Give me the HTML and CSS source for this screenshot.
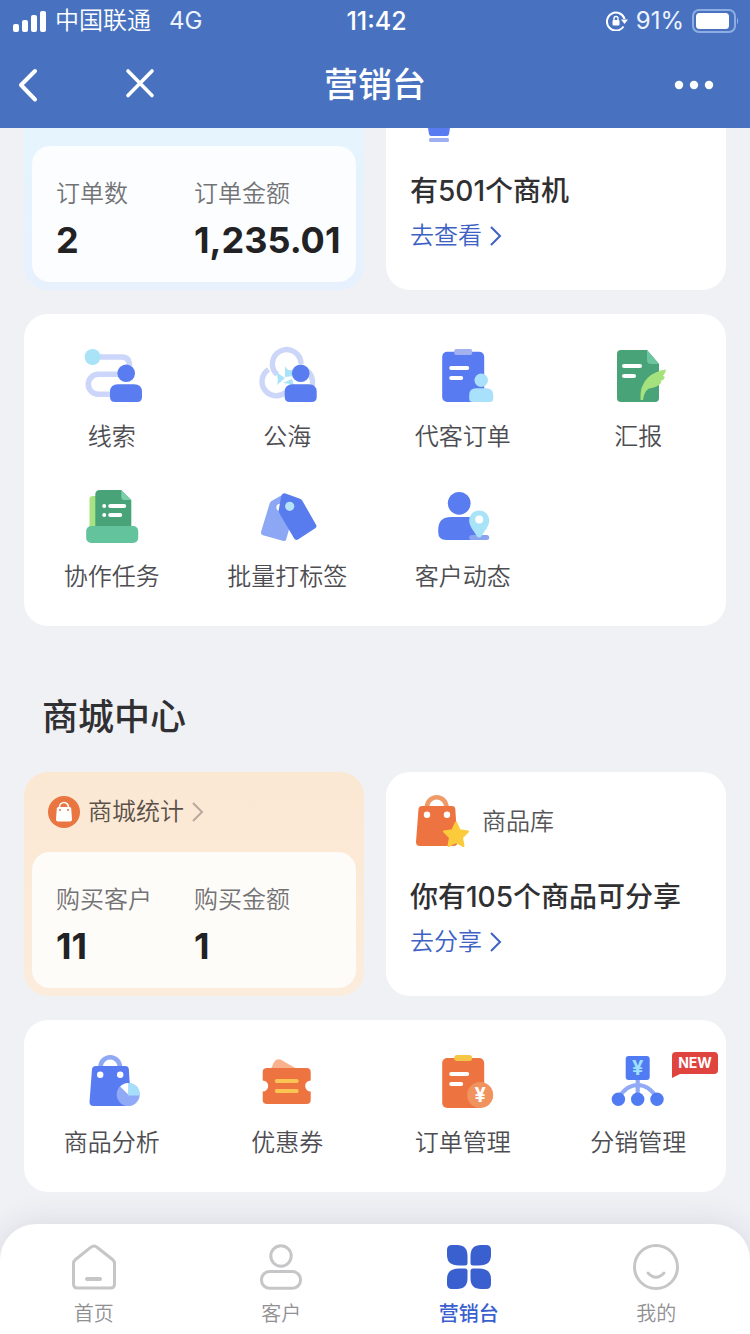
FILE: index.html
```html
<!DOCTYPE html>
<html lang="zh-CN">

<head>
    <meta charset="UTF-8">
    <meta name="viewport" content="width=device-width, initial-scale=1.0">
    <title>营销台</title>
    <link rel="stylesheet" href="styles.css">
</head>

<body>
    <header class="header">
        <div class="status-bar">
            <div class="status-left">
                <svg width="34" height="22" viewBox="0 0 34 22" fill="#fff" aria-hidden="true">
                    <rect x="0" y="14" width="6" height="8" rx="2" />
                    <rect x="9" y="10" width="6" height="12" rx="2" />
                    <rect x="18" y="5" width="6" height="17" rx="2" />
                    <rect x="27" y="1" width="6" height="21" rx="2" />
                </svg>
                <span class="carrier">中国联通</span>
                <span class="network">4G</span>
            </div>
            <span class="clock">11:42</span>
            <div class="status-right">
                <svg width="22" height="20" viewBox="0 0 22 20" aria-hidden="true">
                    <path d="M17.500 15.500A9 9 0 1 1 18.600 8" fill="none" stroke="#fff" stroke-width="2" />
                    <path d="M15 8.500h7l-3.500 4.500z" fill="#fff" />
                    <rect x="6.500" y="9" width="7" height="5.500" rx="1" fill="#fff" />
                    <path d="M8 9V7.500a2 2 0 0 1 4 0V9" fill="none" stroke="#fff" stroke-width="1.400" />
                </svg>
                <span class="battery-level">91%</span>
                <svg width="48" height="24" viewBox="0 0 48 24" aria-hidden="true">
                    <rect x="1" y="1" width="42" height="22" rx="6" fill="none" stroke="#8eaee3" stroke-width="2" />
                    <rect x="4" y="4" width="33" height="16" rx="3.500" fill="#fff" />
                    <path d="M45 8.500q2.500 3.500 0 7z" fill="#8eaee3" />
                </svg>
            </div>
        </div>
        <div class="nav-bar">
            <div class="nav-left">
                <button type="button" class="nav-button" aria-label="返回">
                    <svg width="24" height="36" viewBox="0 0 24 36"><path d="M19 4L5 18l14 14.500" fill="none" stroke="#fff" stroke-width="4" stroke-linecap="round" stroke-linejoin="round" /></svg>
                </button>
                <button type="button" class="nav-button" aria-label="关闭">
                    <svg width="32" height="36" viewBox="0 0 32 36"><path d="M4 4l24 24.500M28 4L4 28.500" fill="none" stroke="#fff" stroke-width="3.600" stroke-linecap="round" /></svg>
                </button>
            </div>
            <h1>营销台</h1>
            <div class="nav-right">
                <button type="button" class="nav-button" aria-label="更多">
                    <svg width="40" height="10" viewBox="0 0 40 10" fill="#fff"><circle cx="5" cy="5" r="4.200" /><circle cx="20" cy="5" r="4.200" /><circle cx="35" cy="5" r="4.200" /></svg>
                </button>
            </div>
        </div>
    </header>

    <main class="content">
        <section class="cards">
            <div class="stat-card stat-blue cut">
                <dl class="stat-panel">
                    <div>
                        <dt>订单数</dt>
                        <dd>2</dd>
                    </div>
                    <div>
                        <dt>订单金额</dt>
                        <dd>1,235.01</dd>
                    </div>
                </dl>
            </div>
            <div class="info-card cut">
                <svg class="lamp" width="60" height="14" viewBox="0 0 60 14" aria-hidden="true">
                    <path d="M18 0h22l-1 6q-.500 2-2 2H21q-1.500 0-2-2z" fill="#587bf2" />
                    <rect x="19" y="10" width="20" height="4" rx="1.500" fill="#9fb0f2" />
                </svg>
                <h3>有501个商机</h3>
                <a href="#" class="more">去查看
                    <svg width="12" height="20" viewBox="0 0 12 20"><path d="M1 1l9 9-9 9" /></svg>
                </a>
            </div>
        </section>

        <nav class="menu">
            <a href="#" class="menu-item">
                <svg class="menu-icon" viewBox="0 0 60 60">
                    <path d="M16 11h24q7.500 0 7.500 9M38 28.300H16.300a10 10 0 0 0 0 20H32" fill="none" stroke="#ccd6fa" stroke-width="5.600" />
                    <circle cx="10.600" cy="11" r="8" fill="#a9e3f8" />
                    <circle cx="44.200" cy="27.300" r="8.800" fill="#5a7cf1" />
                    <path d="M28 46q0-7.700 8-7.700h16q8 0 8 7.700v5q0 5-5 5H33q-5 0-5-5z" fill="#5a7cf1" />
                </svg>
                <span>线索</span>
            </a>
            <a href="#" class="menu-item">
                <svg class="menu-icon" viewBox="0 0 60 60">
                    <g fill="none" stroke="#ccd6f8" stroke-width="5.400">
                        <path d="M20 28.500A14.300 14.300 0 1 1 44 18" />
                        <path d="M11.500 23.500A14.300 14.300 0 1 0 29 46" />
                        <path d="M48 23q9 6 7.500 17" />
                    </g>
                    <g fill="#a9e3f8">
                        <path d="M19 26l9 6-8 7q2-6-1-13z" />
                        <path d="M28 20q2 5 7 4l2 6-9 1z" />
                        <path d="M26 37l9-4 2 7q-5-3-11-3z" />
                    </g>
                    <circle cx="43.700" cy="27.300" r="8.800" fill="#5a7cf1" />
                    <path d="M27.700 46q0-7.700 8-7.700h16q8 0 8 7.700v5q0 5-5 5h-22q-5 0-5-5z" fill="#5a7cf1" />
                </svg>
                <span>公海</span>
            </a>
            <a href="#" class="menu-item">
                <svg class="menu-icon" viewBox="0 0 60 60">
                    <rect x="9.200" y="5.700" width="42" height="50.300" rx="5" fill="#587bf2" />
                    <rect x="21.200" y="3" width="18" height="6" rx="2" fill="#a2b1f0" />
                    <rect x="16.200" y="20" width="20" height="4" rx="2" fill="#fff" />
                    <rect x="16.200" y="30" width="14" height="4" rx="2" fill="#fff" />
                    <circle cx="48.200" cy="34.300" r="6.700" fill="#a9e0fb" />
                    <path d="M36.200 49q0-6.700 7-6.700h10q7 0 7 6.700v3.500q0 3.500-3.500 3.500h-17q-3.500 0-3.500-3.500z" fill="#a9e0fb" />
                </svg>
                <span>代客订单</span>
            </a>
            <a href="#" class="menu-item">
                <svg class="menu-icon" viewBox="0 0 60 60">
                    <path d="M13 4h26l12 14v34q0 4-4 4H13q-4 0-4-4V8q0-4 4-4z" fill="#48a378" />
                    <path d="M39 4l12 14h-8q-4 0-4-4z" fill="#6cc59e" />
                    <rect x="14" y="18" width="20" height="4" rx="2" fill="#fff" />
                    <rect x="14" y="28" width="14" height="4" rx="2" fill="#fff" />
                    <path d="M32.500 54q-1-14 7-22 7-7 18.500-8.500-.500 4-3 6.500l2 1q-1 3-4.500 4l1 1.500q-4 5-12.500 6-5 3-6 11.500z" fill="#a5e17c" />
                </svg>
                <span>汇报</span>
            </a>
            <a href="#" class="menu-item">
                <svg class="menu-icon" viewBox="0 0 60 60">
                    <path d="M11 10h6v34H7.500V13q0-3 3.500-3z" fill="#a9e283" />
                    <path d="M18 4h21l10.300 10v30h-36V8.500q0-4.500 4.700-4.500z" fill="#48a378" />
                    <path d="M39.300 4l10 10h-7q-3 0-3-3z" fill="#7ccfaa" />
                    <circle cx="22.200" cy="20" r="2" fill="#fff" />
                    <rect x="26.200" y="18" width="18" height="4" rx="2" fill="#fff" />
                    <circle cx="22.200" cy="29" r="2" fill="#fff" />
                    <rect x="26.200" y="27" width="14" height="4" rx="2" fill="#fff" />
                    <rect x="4.200" y="40" width="52" height="17" rx="5" fill="#62c39c" />
                </svg>
                <span>协作任务</span>
            </a>
            <a href="#" class="menu-item">
                <svg class="menu-icon" viewBox="0 0 60 60">
                    <path d="M26 8.500L14.500 15q-1.500 1-2 3L4 46q-.500 2.500 2 3.200L26.500 55q2 .500 2.700-1.500L38 22z" fill="#8ca8f5" />
                    <circle cx="23" cy="21.300" r="3.600" fill="#fff" />
                    <path d="M28.500 7.400L43 12.800q1.500.600 2.500 2.200L59.200 39q1 2-1 3.200L41 53.500q-2.500 1.300-3.800-1L22.800 28q-1.300-2-1-4.500l2.500-13.600q.800-3.500 4.200-2.500z" fill="#587bee" />
                    <circle cx="32.700" cy="20.300" r="4.600" fill="#b5e4f8" />
                </svg>
                <span>批量打标签</span>
            </a>
            <a href="#" class="menu-item">
                <svg class="menu-icon" viewBox="0 0 60 60">
                    <circle cx="26.200" cy="17.300" r="11.400" fill="#5a7cf1" />
                    <path d="M5.200 44q0-13 13-13H36q11 0 11 12v11H13.200q-8 0-8-8z" fill="#5a7cf1" />
                    <rect x="36.200" y="49" width="20" height="5" rx="2.500" fill="#8ba4ef" />
                    <path d="M46.200 24.500c6 0 10 4.500 10 10 0 6-4.500 10-7.500 15.500q-2.500 3-5 0c-3-5.500-7.500-9.500-7.500-15.500 0-5.500 4-10 10-10z" fill="#a9e3f8" />
                    <circle cx="46.200" cy="33.500" r="4" fill="#fff" />
                </svg>
                <span>客户动态</span>
            </a>
        </nav>

        <h2 class="section-title">商城中心</h2>

        <section class="cards">
            <div class="stat-card stat-orange">
                <a href="#" class="stat-head">
                    <svg width="32" height="32" viewBox="0 0 32 32">
                        <circle cx="16" cy="16" r="16" fill="#e97640" />
                        <path d="M11.500 12V11a4.500 4.500 0 0 1 9 0v1" fill="none" stroke="#fff" stroke-width="1.600" />
                        <path d="M10.500 11h11q1.500 0 1.700 1.500l.8 11q0 2-2 2H10q-2 0-2-2l.8-11Q9 11 10.500 11z" fill="#fff" />
                        <circle cx="12" cy="14" r="1" fill="#e97640" />
                        <circle cx="20" cy="14" r="1" fill="#e97640" />
                    </svg>
                    <span>商城统计</span>
                    <svg class="arrow" width="12" height="20" viewBox="0 0 12 20"><path d="M1 1l9 9-9 9" /></svg>
                </a>
                <dl class="stat-panel">
                    <div>
                        <dt>购买客户</dt>
                        <dd>11</dd>
                    </div>
                    <div>
                        <dt>购买金额</dt>
                        <dd>1</dd>
                    </div>
                </dl>
            </div>
            <div class="info-card">
                <div class="info-head">
                    <svg class="menu-icon" viewBox="0 0 60 60" aria-hidden="true">
                        <path d="M17 15a9.700 9.700 0 0 1 19.400 0" fill="none" stroke="#f09a68" stroke-width="4.600" />
                        <path d="M12 14h30q3 0 3.300 3l2.200 33q0 4-4 4H10q-4 0-4-4L8.500 17q.500-3 3.500-3z" fill="#ed7440" />
                        <circle cx="17" cy="22.700" r="3.200" fill="#fff" />
                        <circle cx="37" cy="22.700" r="3.200" fill="#fff" />
                        <path d="M46 30.500l3.700 7.800 8.300 1.200-6 6 1.500 8.500-7.500-4-7.500 4 1.500-8.500-6-6 8.300-1.200z" fill="#fbcb3c" stroke="#fbcb3c" stroke-width="2" stroke-linejoin="round" />
                    </svg>
                    <span>商品库</span>
                </div>
                <h3>你有105个商品可分享</h3>
                <a href="#" class="more">去分享
                    <svg width="12" height="20" viewBox="0 0 12 20"><path d="M1 1l9 9-9 9" /></svg>
                </a>
            </div>
        </section>

        <nav class="menu">
            <a href="#" class="menu-item">
                <svg class="menu-icon" viewBox="0 0 60 60">
                    <path d="M18.500 15a9.700 9.700 0 0 1 19.400 0" fill="none" stroke="#8fa9f5" stroke-width="4.600" />
                    <path d="M14 14h29q3.500 0 3.800 3l2.200 33q0 4-4 4H11.500q-4 0-4-4L10 17q.500-3 4-3z" fill="#587bf2" />
                    <circle cx="18.200" cy="22.700" r="3.200" fill="#fff" />
                    <circle cx="38.200" cy="22.700" r="3.200" fill="#fff" />
                    <circle cx="46.200" cy="42.500" r="11.500" fill="#90aaf7" />
                    <path d="M46.200 43.500V31a11.500 11.500 0 0 1 11.500 12.500z" fill="#a5dffb" />
                    <path d="M46.200 42.500V31q-4.500 0-8 3.500z" fill="#fff" />
                </svg>
                <span>商品分析</span>
            </a>
            <a href="#" class="menu-item">
                <svg class="menu-icon" viewBox="0 0 60 60">
                    <path d="M14 17l2.500-6q2.500-5 7-3.500L40 17z" fill="#f8b28e" />
                    <path d="M10 16h39.500q4.200 0 4.200 4v8.500a5.500 5.500 0 0 0 0 11V48q0 4-4.200 4H10q-4.300 0-4.300-4v-8.500a5.500 5.500 0 0 0 0-11V20q0-4 4.300-4z" fill="#ed7440" />
                    <path d="M19.700 29h20M19.700 39h20" stroke="#fcc453" stroke-width="4" stroke-linecap="round" />
                </svg>
                <span>优惠券</span>
            </a>
            <a href="#" class="menu-item">
                <svg class="menu-icon" viewBox="0 0 60 60">
                    <rect x="9.200" y="6" width="42" height="50" rx="5" fill="#ed7440" />
                    <rect x="21.200" y="3" width="18" height="6" rx="3" fill="#f8c647" />
                    <rect x="16.200" y="20" width="20" height="4" rx="2" fill="#fff" />
                    <rect x="16.200" y="30" width="14" height="4" rx="2" fill="#fff" />
                    <circle cx="47.200" cy="43" r="13" fill="#f1935e" />
                    <text x="47.200" y="50" class="yen" fill="#fff">¥</text>
                </svg>
                <span>订单管理</span>
            </a>
            <a href="#" class="menu-item">
                <svg class="menu-icon" viewBox="0 0 60 60">
                    <path d="M29.700 27v18M10.400 46q8-13 19.300-13t19.300 13" fill="none" stroke="#90aaf5" stroke-width="4.200" />
                    <rect x="17.700" y="4" width="24" height="24" rx="3" fill="#507bf2" />
                    <text x="29.700" y="23" class="yen" fill="#9fe0fb">¥</text>
                    <circle cx="10.400" cy="47.300" r="6.700" fill="#507bf2" />
                    <circle cx="29.700" cy="47.300" r="6.700" fill="#507bf2" />
                    <circle cx="49" cy="47.300" r="6.700" fill="#507bf2" />
                </svg>
                <span>分销管理</span>
                <em class="badge">NEW</em>
            </a>
        </nav>
    </main>

    <nav class="tab-bar">
        <a href="#" class="tab">
            <svg width="46" height="46" viewBox="0 0 46 46">
                <path d="M20 3.200q3-2.300 6 0L41.500 15.500q2 1.600 2 4V40q0 4-4 4h-33q-4 0-4-4V19.500q0-2.400 2-4z" />
                <path d="M16 35h13" stroke-width="4" />
            </svg>
            <span>首页</span>
        </a>
        <a href="#" class="tab">
            <svg width="46" height="46" viewBox="0 0 46 46">
                <circle cx="23" cy="12" r="10.200" />
                <rect x="3.500" y="27.500" width="39" height="16.700" rx="8" />
            </svg>
            <span>客户</span>
        </a>
        <a href="#" class="tab active">
            <svg width="46" height="46" viewBox="0 0 46 46">
                <path d="M6 1h5q10.500 0 10.500 11v7q0 2.500-2.500 2.500h-6Q1 21.500 1 11V6q0-5 5-5z" />
                <path d="M40 1h-5Q24.500 1 24.500 12v7q0 2.500 2.500 2.500h6q12 0 12-10.500V6q0-5-5-5z" />
                <path d="M6 45h5q10.500 0 10.500-11v-7q0-2.500-2.500-2.500h-6Q1 24.500 1 35v5q0 5 5 5z" />
                <path d="M40 45h-5q-10.500 0-10.500-11v-7q0-2.500 2.500-2.500h6q12 0 12 10.500v5q0 5-5 5z" />
            </svg>
            <span>营销台</span>
        </a>
        <a href="#" class="tab">
            <svg width="46" height="46" viewBox="0 0 46 46">
                <circle cx="23" cy="23" r="21.500" />
                <path d="M15 29q8 8.500 16 0" stroke-width="3" />
            </svg>
            <span>我的</span>
        </a>
    </nav>
</body>

</html>
```
FILE: styles.css
```css
/* General styles */
* {
    box-sizing: border-box;
}

body {
    margin: 0;
    min-height: 100vh;
    display: flex;
    flex-direction: column;
    background-color: #f0f1f5;
    color: #303033;
    font-family: Inter, "Noto Sans CJK SC", sans-serif;
    font-size: 24px;
    line-height: 32px;
}

a {
    color: inherit;
    text-decoration: none;
}

svg {
    display: block;
    flex-shrink: 0;
}

h1,
h2,
h3,
dl,
dd {
    margin: 0;
    font-weight: 500;
}

/* Header */
.header {
    background-color: #4872bf;
    color: #fff;
}

.status-bar,
.nav-bar {
    display: grid;
    grid-template-columns: 1fr auto 1fr;
    align-items: center;
}

.status-bar {
    height: 40px;
    padding: 2px 10px 0 13px;
}

.status-left,
.status-right {
    display: flex;
    align-items: center;
}

.carrier {
    margin: 0 18px 0 8px;
    font-weight: 350;
}

.network,
.battery-level {
    color: #eef4ff;
}

.clock {
    font-size: 25px;
    font-weight: 500;
}

.status-right {
    justify-content: flex-end;
    gap: 8px;
}

.nav-bar {
    height: 88px;
    padding: 2px 16px 0;
}

.nav-bar h1 {
    font-size: 34px;
    line-height: 48px;
}

.nav-left {
    display: flex;
    align-items: center;
    gap: 84px;
}

.nav-right {
    display: flex;
    justify-content: flex-end;
    padding-right: 20px;
}

.nav-button {
    padding: 0;
    border: none;
    background: none;
    cursor: pointer;
}

/* Page content */
.content {
    padding: 0 24px 32px;
}

.cards {
    display: grid;
    grid-template-columns: 1fr 1fr;
    gap: 22px;
    margin-bottom: 24px;
}

.stat-card {
    padding: 0 8px 8px;
    border-radius: 24px;
}

.stat-blue {
    background: linear-gradient(#e5f4fd, #e7f1fe);
}

.stat-orange {
    background: linear-gradient(#fbe8d3, #fcecdc);
}

.stat-head {
    display: flex;
    align-items: center;
    gap: 8px;
    height: 80px;
    padding: 0 16px;
    color: #5a5049;
    font-weight: 350;
}

.arrow {
    fill: none;
    stroke: #b8a99d;
    stroke-width: 2;
}

.stat-panel {
    display: grid;
    grid-template-columns: repeat(2, minmax(0, 1fr));
    padding: 32px 24px 20px;
    border-radius: 18px;
    background-color: #fefcf9;
}

.stat-blue .stat-panel {
    background-color: #fbfdff;
}

.stat-panel dt {
    margin-bottom: 8px;
    color: #737375;
    font-weight: 350;
}

.stat-panel dd {
    color: #222225;
    font-size: 36px;
    font-weight: 700;
    line-height: 44px;
}

.info-card {
    padding: 20px 24px 38px;
    border-radius: 24px;
    background-color: #fff;
}

.info-head {
    display: flex;
    align-items: center;
    gap: 12px;
    margin-bottom: 25px;
    color: #555558;
    font-weight: 350;
}

.info-card h3 {
    margin-bottom: 9px;
    font-size: 28px;
    line-height: 40px;
}

.more {
    display: flex;
    align-items: center;
    gap: 8px;
    color: #3e62c4;
    font-weight: 350;
}

.more svg {
    fill: none;
    stroke: #3e62c4;
    stroke-width: 2;
}

/* Top cards run on under the header */
.cut {
    padding-top: 18px;
    border-top-left-radius: 0;
    border-top-right-radius: 0;
}

.info-card.cut {
    padding-top: 0;
}

.lamp {
    margin-bottom: 29px;
}

/* Icon menu */
.menu {
    display: grid;
    grid-template-columns: repeat(4, 1fr);
    row-gap: 33px;
    padding: 32px 0 33px;
    border-radius: 24px;
    background-color: #fff;
}

.menu-item {
    position: relative;
    display: flex;
    flex-direction: column;
    align-items: center;
    gap: 15px;
    color: #4d4d52;
    font-weight: 350;
}

.menu-icon {
    width: 60px;
    height: 60px;
    overflow: visible;
}

.yen {
    font-size: 20px;
    font-weight: 700;
    text-anchor: middle;
}

.badge {
    position: absolute;
    top: 0;
    right: 8px;
    width: 46px;
    border-radius: 4px 4px 4px 0;
    background-color: #e0443f;
    color: #fff;
    font-size: 14px;
    font-style: normal;
    font-weight: 700;
    line-height: 22px;
    text-align: center;
}

.badge::after {
    content: "";
    position: absolute;
    top: 100%;
    left: 0;
    border-top: 4px solid #e0443f;
    border-right: 8px solid transparent;
}

.section-title {
    padding: 65px 18px 29px;
    font-size: 36px;
    line-height: 52px;
}

/* Bottom tabs */
.tab-bar {
    display: grid;
    grid-template-columns: repeat(4, 1fr);
    margin-top: auto;
    padding: 20px 0 6px;
    border-radius: 36px 36px 0 0;
    background-color: #fff;
    box-shadow: 0 0 32px rgba(40, 40, 80, 0.12);
}

.tab {
    display: flex;
    flex-direction: column;
    align-items: center;
    gap: 10px;
    color: #909093;
    font-size: 20px;
    font-weight: 350;
    line-height: 28px;
}

.tab svg {
    fill: none;
    stroke: #c6c6c9;
    stroke-width: 3;
    stroke-linecap: round;
}

.tab.active {
    color: #3a5fce;
    font-weight: 500;
}

.tab.active svg {
    fill: #3a5fce;
    stroke: none;
}
```
